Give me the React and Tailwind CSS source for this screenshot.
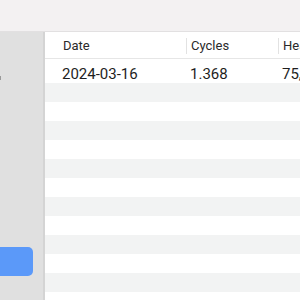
const stripes = Array.from({ length: 12 }, (_, i) => i);

export default function App() {
  return (
    <div className="flex h-[300px] w-[300px] flex-col overflow-hidden bg-white font-['Roboto',sans-serif]">
      {/* title bar */}
      <div className="h-[32px] shrink-0 border-b border-[#e2e0e1] bg-[#f3f1f2]" />

      <div className="flex min-h-0 flex-1">
        {/* sidebar */}
        <div className="flex w-[45px] shrink-0 flex-col border-r-2 border-r-[#d4d4d4] bg-[#e0e0e0]">
          <div className="mt-[44px] h-[4px] w-[1px] bg-[#9a9a9a]" />
          <div className="mt-[167px] h-[29px] w-[33px] rounded-r-[5px] bg-[#5b99f9]" />
        </div>

        {/* table */}
        <div className="flex min-w-0 flex-1 flex-col">
          <div className="flex h-[27px] shrink-0 items-center border-b border-[#e6e6e6] pt-[1px] text-[13px] text-[#2a2a2a]">
            <div className="w-[141px] shrink-0 pl-[18px]">Date</div>
            <div className="flex w-[92px] shrink-0 items-center">
              <span className="h-[16px] w-px bg-[#e2e2e2]" />
              <span className="pl-[4px]">Cycles</span>
            </div>
            <div className="flex shrink-0 items-center whitespace-nowrap">
              <span className="h-[16px] w-px bg-[#e2e2e2]" />
              <span className="pl-[4px]">Health</span>
            </div>
          </div>

          <div className="flex h-[24px] shrink-0 items-center pt-[6px] text-[15px] text-[#1e1e1e]">
            <div className="w-[141px] shrink-0 pl-[17px]">2024-03-16</div>
            <div className="w-[92px] shrink-0 pl-[4px]">1.368</div>
            <div className="whitespace-nowrap pl-[4px]">75,2 %</div>
          </div>

          {stripes.map((i) => (
            <div
              key={i}
              className={i % 2 === 0 ? "h-[19px] shrink-0 bg-[#f2f3f3]" : "h-[19px] shrink-0 bg-white"}
            />
          ))}
        </div>
      </div>
    </div>
  );
}
